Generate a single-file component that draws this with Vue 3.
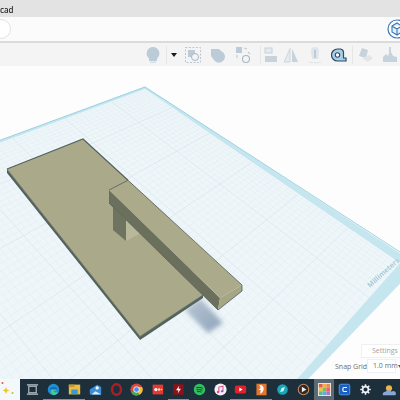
<script setup>
// workplane corners on screen: top, right, bottom, left
const A = [145, 89], R = [400, 263], B = [110, 590], L = [-170, 206]

const mix = (p, q, t) => [p[0] + (q[0] - p[0]) * t, p[1] + (q[1] - p[1]) * t]

const gridLines = []
const steps = 60
for (let i = 1; i < steps; i++) {
  // far side squeezed a little for the perspective
  const t = Math.pow(i / steps, 1.25)
  const major = i % 10 === 0
  const a = mix(A, R, t), b = mix(L, B, t)
  const c = mix(A, L, t), d = mix(R, B, t)
  gridLines.push({ id: 'u' + i, x1: a[0], y1: a[1], x2: b[0], y2: b[1], major })
  gridLines.push({ id: 'v' + i, x1: c[0], y1: c[1], x2: d[0], y2: d[1], major })
}
</script>

<template>
  <div class="page">
    <div class="titlebar"><span class="title">cad</span></div>

    <div class="addressbar">
      <div class="search"></div>
      <svg class="cube" width="22" height="22" viewBox="0 0 22 22">
        <circle cx="11" cy="11" r="9" fill="#fff" stroke="#3a78b5" stroke-width="1.2" />
        <path d="M6 8l5-3 5 3v6l-5 3-5-3zM6 8l5 3 5-3M11 11v6" fill="#e4eff7" stroke="#3a78b5" stroke-width="1.1" />
      </svg>
    </div>

    <div class="toolbar">
      <div class="tool">
        <svg width="16" height="18" viewBox="0 0 16 18">
          <path d="M8 1a6.500 6.500 0 0 0-4 11.500V15h8v-2.500A6.500 6.500 0 0 0 8 1z" fill="#bccbd8" />
          <rect x="5" y="15.500" width="6" height="1.500" fill="#d5dde3" />
        </svg>
      </div>
      <div class="sep"></div>
      <div class="caret"></div>
      <div class="tool wide">
        <svg width="18" height="18" viewBox="0 0 18 18">
          <rect x="1.500" y="1.500" width="15" height="15" fill="none" stroke="#bcc8d2" stroke-dasharray="2 1.500" />
          <rect x="4" y="4" width="7" height="7" fill="#bccbd8" />
          <circle cx="11" cy="11" r="3.500" fill="#f4f4f4" stroke="#a9b6c1" />
        </svg>
      </div>
      <div class="tool wide">
        <svg width="18" height="18" viewBox="0 0 18 18">
          <path d="M2 3h8l2 2a6 6 0 1 1-7 9L2 10z" fill="#bccbd8" />
        </svg>
      </div>
      <div class="tool wide">
        <svg width="18" height="18" viewBox="0 0 18 18">
          <rect x="2" y="1" width="6" height="6" fill="#bccbd8" />
          <path d="M10 2l3 1M14 6l2 2" stroke="#c6ced5" stroke-width="1.200" />
          <path d="M3 9v3" stroke="#c6ced5" stroke-width="1.200" />
          <circle cx="12" cy="13" r="3.500" fill="none" stroke="#a9b6c1" stroke-width="1.100" />
        </svg>
      </div>
      <div class="sep far"></div>
      <div class="tool narrow">
        <svg width="14" height="18" viewBox="0 0 14 18">
          <rect x="1" y="2" width="7" height="5" fill="#e6eaed" stroke="#c8d0d6" />
          <rect x="1" y="10" width="12" height="6" fill="#c6d2dc" />
        </svg>
      </div>
      <div class="tool">
        <svg width="16" height="16" viewBox="0 0 16 16">
          <path d="M7 1.500V15H1z" fill="#e6eaed" stroke="#c8d0d6" stroke-width=".8" />
          <path d="M9 1.500V15h6z" fill="#c6d2dc" />
        </svg>
      </div>
      <div class="tool">
        <svg width="14" height="18" viewBox="0 0 14 18">
          <path d="M7 1c3 0 4 2 4 4l-1 8H4L3 5c0-2 1-4 4-4z" fill="#dfe5e9" />
          <path d="M6 4h2v8H6z" fill="#bccbd8" />
          <path d="M1 16c3 1 9 1 12 0" stroke="#d2d9de" stroke-dasharray="1.500 1" fill="none" />
        </svg>
      </div>
      <div class="tool">
        <svg width="16" height="16" viewBox="0 0 16 16">
          <path d="M6.500 2h3a3.500 3.500 0 0 1 3 3.500V11H15v3H6.500a6 6 0 0 1 0-12z" fill="#a9cfe6" stroke="#2e4a66" stroke-width="1.200" />
          <circle cx="6.500" cy="8" r="2.200" fill="#fff" stroke="#2e4a66" stroke-width="1.100" />
        </svg>
      </div>
      <div class="sep"></div>
      <div class="tool">
        <svg width="16" height="16" viewBox="0 0 16 16">
          <path d="M4 1l6 2-2 8-7-2z" fill="#c6d2dc" />
          <path d="M4 11l7-3 4 3-5 4z" fill="#dfe5e9" />
        </svg>
      </div>
      <div class="tool">
        <svg width="16" height="18" viewBox="0 0 16 18">
          <path d="M1 16v-5l3-3 2 2 2-6 3 6 4 1v5z" fill="#c6d2dc" />
          <path d="M8 1v5" stroke="#bccbd8" stroke-width="1.500" />
        </svg>
      </div>
    </div>

    <div class="canvas">
      <svg class="scene" width="400" height="313" viewBox="0 66 400 313">
        <defs>
          <filter id="soft" x="-30%" y="-30%" width="160%" height="160%">
            <feGaussianBlur stdDeviation="2.500" />
          </filter>
          <linearGradient id="shade" x1="0" y1="0" x2="1" y2="1">
            <stop offset="0" stop-color="#b8c7d4" />
            <stop offset="1" stop-color="#8ea2b9" />
          </linearGradient>
        </defs>

        <!-- workplane -->
        <polygon points="145,86.500 418,265 105,590 -170,203" fill="#c6e6ef" />
        <polygon points="145,89 400,263 110,590 -170,206" fill="#eef6f9" />
        <line
          v-for="l in gridLines"
          :key="l.id"
          :x1="l.x1"
          :y1="l.y1"
          :x2="l.x2"
          :y2="l.y2"
          :stroke="l.major ? '#d3e3ea' : '#e3eef3'"
          stroke-width=".6"
        />
        <path d="M-2 141L145 87L400 252" fill="none" stroke="#9ed2e2" stroke-width="1" />
        <text class="ruler" transform="translate(370 288) rotate(-42)">Millimeters</text>

        <polygon points="200,298 185,310 208,333 223,323" fill="url(#shade)" filter="url(#soft)" />

        <!-- base plate -->
        <polygon points="7,169 7,173 140,340 203,298 203,294 140,336" fill="#56635d" />
        <polygon points="7,169 83,139 165,214.300 203,295 140,336.500" fill="#aaaa8b" />
        <polyline points="7,169 83,139 128,180.300" fill="none" stroke="#55635e" stroke-width="1.200" />
        <polyline points="7,169 140,336.500 203,295" fill="none" stroke="#66736a" stroke-width=".8" />

        <!-- leg -->
        <polygon points="113,207 113,230 126,241 126,220" fill="#6f7461" />
        <polygon points="126,220 126,241 141,233 127,220" fill="#b9b89b" />

        <!-- bar -->
        <polygon points="109,190 109,203 218,310 220,298" fill="#6b705d" />
        <polygon points="109,190 128,180.300 242,285 220,298" fill="#abab8c" />
        <polygon points="220,298 242,285 242,291 218,310" fill="#a6a685" />
        <polyline points="109,203 218,310 242,291 242,285 128,180.300 109,190" fill="none" stroke="#54605a" stroke-width=".8" />
      </svg>

      <div class="settings">Settings</div>
      <div class="snap">
        <span class="snap-label">Snap Grid</span>
        <span class="snap-input">1.0 mm</span>
        <span class="snap-caret"></span>
      </div>
    </div>

    <div class="taskbar">
      <div class="widget">
        <svg width="20" height="21" viewBox="0 0 20 21">
          <circle cx="2.500" cy="4" r="1" fill="#e4573d" />
          <path d="M6 8l1 2.500 2.500 1-2.500 1L6 15l-1-2.500-2.500-1 2.500-1z" fill="#f2c230" />
          <circle cx="12.500" cy="14" r="1" fill="#c9b23c" />
        </svg>
      </div>
      <div class="tasks">
        <div class="task">
          <svg viewBox="0 0 14 14">
            <rect x="3" y="3.500" width="8" height="7" fill="none" stroke="#b9c2c8" stroke-width="1.200" />
            <path d="M1 2h12M1 12h12" stroke="#b9c2c8" stroke-width="1.200" />
          </svg>
        </div>
        <div class="task open">
          <svg viewBox="0 0 16 16">
            <circle cx="8" cy="8" r="7" fill="#1f8fd6" />
            <path d="M5 10c0-3 5-4 6.500-1.500.5 1-2 1-3.500 1 0 2 3 3 6 1.500-1 2-3 3.500-6 3.500-2 0-3-2-3-4.500z" fill="#48d18a" />
            <path d="M3 8c1-3 8-5 10 0H8c-2-1-4 0-5 0z" fill="#0f6fb5" />
          </svg>
        </div>
        <div class="task open">
          <svg viewBox="0 0 16 16">
            <rect x="1" y="2" width="14" height="12" fill="#e9bd45" />
            <rect x="1" y="2" width="7" height="3" fill="#c9972b" />
            <rect x="4" y="8" width="8" height="6" fill="#3d9ad0" />
          </svg>
        </div>
        <div class="task">
          <svg viewBox="0 0 16 16">
            <path d="M1 14V8l9-6 5 3v9z" fill="#3a8fd8" />
            <path d="M3 14l5-4 7 4z" fill="#dcecf8" />
            <circle cx="10" cy="6" r="2" fill="#fff" />
          </svg>
        </div>
        <div class="task">
          <svg viewBox="0 0 16 16">
            <ellipse cx="8" cy="8" rx="5.500" ry="6.500" fill="none" stroke="#b01c24" stroke-width="3" />
          </svg>
        </div>
        <div class="task">
          <svg viewBox="0 0 16 16">
            <circle cx="8" cy="8" r="7.500" fill="#d9483b" />
            <path d="M8 8L1.500 12A7.500 7.500 0 0 0 11.500 14.600z" fill="#4aa55a" />
            <path d="M8 8l3.500 6.600A7.500 7.500 0 0 0 15 5H8z" fill="#f2c230" />
            <circle cx="8" cy="8" r="3.500" fill="#4b8fe8" stroke="#fff" />
          </svg>
        </div>
        <div class="task">
          <svg viewBox="0 0 16 16">
            <rect x="2" y="2" width="13" height="12" fill="#e8392f" />
            <circle cx="6" cy="8" r="2" fill="#fff" />
            <circle cx="10" cy="8" r="1.500" fill="#ffd6d1" />
            <circle cx="13" cy="8" r="1" fill="#ffd6d1" />
          </svg>
        </div>
        <div class="task open">
          <svg viewBox="0 0 16 16">
            <rect x="1.500" y="1.500" width="13" height="13" fill="#8c1118" />
            <path d="M9 3L5 9h3l-1 4 4-6H8z" fill="#fff" />
          </svg>
        </div>
        <div class="task">
          <svg viewBox="0 0 16 16">
            <circle cx="8" cy="8" r="7" fill="#2fc15f" />
            <path d="M4 6c3-1 6-.6 8 .6M4.500 8.500c2.500-.7 5-.4 7 .6M5 10.800c2-.5 4-.3 5.500.5" fill="none" stroke="#10301c" stroke-width="1.100" />
          </svg>
        </div>
        <div class="task">
          <svg viewBox="0 0 16 16">
            <circle cx="8" cy="8" r="7.500" fill="#f6f1f3" />
            <path d="M6 11V5l5-1v6" fill="none" stroke="#d84f8f" stroke-width="1.300" />
            <circle cx="5" cy="11" r="1.500" fill="#d84f8f" />
            <circle cx="10" cy="10" r="1.500" fill="#9a62c9" />
          </svg>
        </div>
        <div class="task open">
          <svg viewBox="0 0 16 16">
            <rect x="1" y="3" width="14" height="10" rx="2.500" fill="#e4202b" />
            <path d="M6.500 5.500L10.500 8l-4 2.500z" fill="#fff" />
          </svg>
        </div>
        <div class="task open">
          <svg viewBox="0 0 16 18">
            <rect x="1" y="1" width="14" height="16" fill="#e9742b" />
            <path d="M5 3c4-1 6 2 6 5s-2 6-5 7l1-5-3-1 3-2z" fill="#fff" />
          </svg>
        </div>
        <div class="task">
          <svg viewBox="0 0 16 16">
            <circle cx="8" cy="8" r="6.500" fill="#19a7b5" />
            <path d="M5 11l2-5 4-1-2 5z" fill="#d4f2f4" />
          </svg>
        </div>
        <div class="task">
          <svg viewBox="0 0 16 16">
            <circle cx="8" cy="8" r="6.500" fill="#2f2a2a" stroke="#c98a5c" stroke-width="1.300" />
            <path d="M6 4.500L11.500 8 6 11.500z" fill="#f2eeea" />
          </svg>
        </div>
        <div class="task active">
          <svg viewBox="0 0 14 14">
            <rect width="14" height="14" fill="#f3e9d2" />
            <rect x="1" y="1" width="4" height="4" fill="#e05b52" />
            <rect x="5" y="1" width="4" height="4" fill="#f2b441" />
            <rect x="9" y="1" width="4" height="4" fill="#e98a55" />
            <rect x="1" y="5" width="4" height="4" fill="#f2c230" />
            <rect x="5" y="5" width="4" height="4" fill="#7bbd6a" />
            <rect x="9" y="5" width="4" height="4" fill="#e7646a" />
            <rect x="1" y="9" width="4" height="4" fill="#5bb7a5" />
            <rect x="5" y="9" width="4" height="4" fill="#6aa8dc" />
            <rect x="9" y="9" width="4" height="4" fill="#9c7cd0" />
          </svg>
        </div>
        <div class="task">
          <svg viewBox="0 0 16 16">
            <rect x="1.500" y="1.500" width="13" height="13" rx="2" fill="#1c5fc4" stroke="#5ba1ec" />
            <path d="M11 5.500H7.500A1.500 1.500 0 0 0 6 7v2a1.500 1.500 0 0 0 1.500 1.500H11" fill="none" stroke="#fff" stroke-width="1.400" />
          </svg>
        </div>
        <div class="task">
          <svg viewBox="0 0 16 16">
            <circle cx="8" cy="8" r="3.500" fill="none" stroke="#eef1f3" stroke-width="2" />
            <path d="M8 1.500v3M8 11.500v3M1.500 8h3M11.500 8h3M3.400 3.400l2.100 2.100M10.500 10.500l2.100 2.100M12.600 3.400l-2.100 2.100M5.500 10.500l-2.100 2.100" stroke="#eef1f3" stroke-width="2" />
          </svg>
        </div>
        <div class="weather">
          <svg width="14" height="14" viewBox="0 0 16 16">
            <circle cx="8" cy="6" r="3.500" fill="#f2b441" />
            <path d="M1 14a3 3 0 0 1 3-4 4 4 0 0 1 7 0 2.500 2.500 0 0 1 4 4z" fill="#8aa6d8" />
          </svg>
        </div>
      </div>
    </div>
  </div>
</template>

<style scoped>
.page {
  width: 400px;
  height: 400px;
  overflow: hidden;
  display: flex;
  flex-direction: column;
  font-family: "Open Sans", "Liberation Sans", sans-serif;
  background: #fff;
}

.titlebar {
  height: 17px;
  flex: none;
  background: #e3e3e3;
  display: flex;
  align-items: center;
  filter: blur(0.3px);
}

.title {
  font-size: 8px;
  font-weight: 600;
  color: #2c2c2c;
  margin-top: 1px;
}

.addressbar {
  height: 24px;
  flex: none;
  background: #fbfbfb;
  border-bottom: 2px solid #d8dcdf;
  display: flex;
  align-items: center;
  justify-content: space-between;
  overflow: hidden;
}

.search {
  width: 18px;
  height: 18px;
  margin-left: -9px;
  background: #fff;
  border: 1px solid #e2e2e2;
  border-radius: 50%;
}

.cube {
  flex: none;
  margin-right: -8px;
}

.toolbar {
  height: 23px;
  flex: none;
  padding-left: 141px;
  background: #f4f4f4;
  display: flex;
  align-items: center;
  overflow: hidden;
  filter: blur(0.4px);
}

.tool {
  width: 24px;
  flex: none;
  display: flex;
  justify-content: center;
}

.tool.wide {
  width: 25px;
}

.tool.narrow {
  width: 17px;
}

.sep {
  width: 1px;
  height: 18px;
  flex: none;
  margin: 0 1px;
  background: #e6e6e6;
}

.sep.far {
  margin: 0 1px 0 5px;
}

.caret {
  width: 0;
  height: 0;
  flex: none;
  margin: 0 3px 0 3px;
  border-left: 3px solid transparent;
  border-right: 3px solid transparent;
  border-top: 4px solid #1b1b1b;
}

.canvas {
  flex: 1;
  min-height: 0;
  position: relative;
  background: #fdfdfd;
  overflow: hidden;
}

.scene {
  display: block;
  filter: blur(0.3px);
}

.ruler {
  font-size: 7px;
  font-weight: 700;
  fill: #a9cbd8;
}

.settings {
  position: absolute;
  top: 278px;
  left: 361px;
  width: 45px;
  height: 14px;
  padding-left: 10px;
  box-sizing: border-box;
  background: #fff;
  border: 1px solid #f0f0f0;
  font-size: 7px;
  line-height: 12px;
  color: #a3a3a3;
}

.snap {
  position: absolute;
  top: 293px;
  left: 335px;
  display: flex;
  align-items: center;
  gap: 2px;
  font-size: 7px;
  color: #6d6d6d;
}

.snap-label {
  width: 30px;
  white-space: nowrap;
}

.snap-input {
  width: 29px;
  height: 14px;
  box-sizing: border-box;
  padding-left: 5px;
  background: #fff;
  border: 1px solid #f0f0f0;
  line-height: 12px;
  white-space: nowrap;
}

.snap-caret {
  width: 0;
  height: 0;
  border-left: 2px solid transparent;
  border-right: 2px solid transparent;
  border-top: 3px solid #555;
}

.taskbar {
  height: 21px;
  flex: none;
  display: flex;
  background: #1e2f3c;
  filter: blur(0.3px);
}

.widget {
  width: 20px;
  flex: none;
  background: #f3f8fa;
}

.tasks {
  flex: 1;
  padding-left: 2.5px;
  display: flex;
  align-items: stretch;
}

.task {
  width: 20.8px;
  flex: none;
  display: flex;
  align-items: center;
  justify-content: center;
  box-sizing: border-box;
}

.task svg {
  width: 13px;
  height: 13px;
}

.task.open {
  border-bottom: 1px solid #7d94a5;
}

.task.active {
  background: #5b6a75;
}

.weather {
  margin-left: 6px;
  display: flex;
  align-items: center;
}
</style>
